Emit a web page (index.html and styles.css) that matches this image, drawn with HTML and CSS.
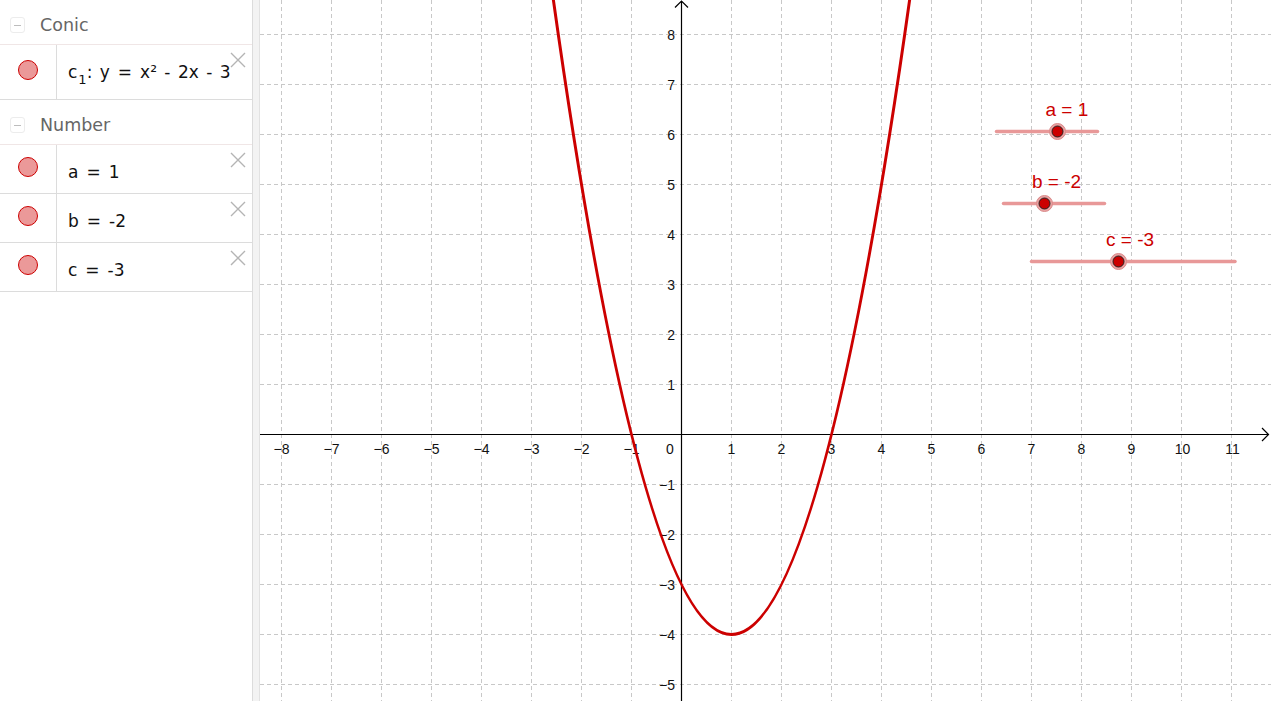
FILE: index.html
```html
<!DOCTYPE html>
<html lang="en">
<head>
<meta charset="utf-8">
<title>Conic</title>
<link rel="stylesheet" href="styles.css">
</head>
<body>
<div class="app">
  <aside class="algebra">
    <div class="group-head"><span class="toggle"></span><span class="group-name">Conic</span></div>
    <div class="item item-tall">
      <div class="marker-cell"><span class="marker"></span></div>
      <div class="formula">c<span class="sub">1</span>: y<span class="op">=</span>x² - 2x - 3</div>
      <svg class="close" viewBox="0 0 16 16"><path d="M1 1L15 15M15 1L1 15"/></svg>
    </div>
    <div class="group-head"><span class="toggle"></span><span class="group-name">Number</span></div>
    <div class="item">
      <div class="marker-cell"><span class="marker"></span></div>
      <div class="formula">a<span class="op">=</span>1</div>
      <svg class="close" viewBox="0 0 16 16"><path d="M1 1L15 15M15 1L1 15"/></svg>
    </div>
    <div class="item">
      <div class="marker-cell"><span class="marker"></span></div>
      <div class="formula">b<span class="op">=</span>-2</div>
      <svg class="close" viewBox="0 0 16 16"><path d="M1 1L15 15M15 1L1 15"/></svg>
    </div>
    <div class="item">
      <div class="marker-cell"><span class="marker"></span></div>
      <div class="formula">c<span class="op">=</span>-3</div>
      <svg class="close" viewBox="0 0 16 16"><path d="M1 1L15 15M15 1L1 15"/></svg>
    </div>
  </aside>
  <div class="splitter"></div>
  <main class="graphics">
    <svg class="canvas" width="1011" height="701" viewBox="260 0 1011 701">
      <path class="grid" d="M281.5 0V701M331.5 0V701M381.5 0V701M431.5 0V701M481.5 0V701M531.5 0V701M581.5 0V701M631.5 0V701M731.5 0V701M781.5 0V701M831.5 0V701M881.5 0V701M931.5 0V701M981.5 0V701M1031.5 0V701M1081.5 0V701M1131.5 0V701M1181.5 0V701M1231.5 0V701"/>
      <path class="grid" d="M260 34.5H1271M260 84.5H1271M260 134.5H1271M260 184.5H1271M260 234.5H1271M260 284.5H1271M260 334.5H1271M260 384.5H1271M260 484.5H1271M260 534.5H1271M260 584.5H1271M260 634.5H1271M260 684.5H1271"/>
      <path class="axis" d="M260 434.5H1268M1262 428L1268.5 434.5L1262 441M681.5 701V1M675 7.5L681.5 1L688 7.5"/>
      <g class="tick xt">
        <text x="281.5" y="454">−8</text>
        <text x="331.5" y="454">−7</text>
        <text x="381.5" y="454">−6</text>
        <text x="431.5" y="454">−5</text>
        <text x="481.5" y="454">−4</text>
        <text x="531.5" y="454">−3</text>
        <text x="581.5" y="454">−2</text>
        <text x="631.5" y="454">−1</text>
        <text x="670" y="454">0</text>
        <text x="731.5" y="454">1</text>
        <text x="781.5" y="454">2</text>
        <text x="831.5" y="454">3</text>
        <text x="881.5" y="454">4</text>
        <text x="931.5" y="454">5</text>
        <text x="981.5" y="454">6</text>
        <text x="1031.5" y="454">7</text>
        <text x="1081.5" y="454">8</text>
        <text x="1131.5" y="454">9</text>
        <text x="1182.5" y="454">10</text>
        <text x="1232.5" y="454">11</text>
      </g>
      <g class="tick yt">
        <text x="675" y="39.5">8</text>
        <text x="675" y="89.5">7</text>
        <text x="675" y="139.5">6</text>
        <text x="675" y="189.5">5</text>
        <text x="675" y="239.5">4</text>
        <text x="675" y="289.5">3</text>
        <text x="675" y="339.5">2</text>
        <text x="675" y="389.5">1</text>
        <text x="675" y="489.5">−1</text>
        <text x="675" y="539.5">−2</text>
        <text x="675" y="589.5">−3</text>
        <text x="675" y="639.5">−4</text>
        <text x="675" y="689.5">−5</text>
      </g>
      <path class="curve" d="M546.5 -50Q731.5 1319 916.5 -50"/>
      <g class="slider">
        <path class="track" d="M996.5 131.5H1097.5"/>
        <circle class="halo" cx="1057.5" cy="131.5" r="8"/>
        <circle class="knob" cx="1057.5" cy="131.5" r="5.5"/>
        <text class="slabel" x="1045.5" y="116">a = 1</text>
      </g>
      <g class="slider">
        <path class="track" d="M1003.5 203.5H1104.5"/>
        <circle class="halo" cx="1044.5" cy="203.5" r="8"/>
        <circle class="knob" cx="1044.5" cy="203.5" r="5.5"/>
        <text class="slabel" x="1032" y="188">b = -2</text>
      </g>
      <g class="slider">
        <path class="track" d="M1031.5 261.5H1235"/>
        <circle class="halo" cx="1118.5" cy="261.5" r="8"/>
        <circle class="knob" cx="1118.5" cy="261.5" r="5.5"/>
        <text class="slabel" x="1106" y="246">c = -3</text>
      </g>
    </svg>
  </main>
</div>
</body>
</html>
```
FILE: styles.css
```css
* { box-sizing: border-box; }
html, body { margin: 0; padding: 0; background: #fff; overflow: hidden; }
body { font-family: "DejaVu Sans", "Liberation Sans", sans-serif; color: #1a1a1a; }

.app { display: flex; width: 1271px; height: 701px; }

.algebra { width: 253px; flex: none; border-right: 1px solid #dcdcdc; background: #fff; }
.splitter { width: 7px; flex: none; background: #f3f3f3; border-right: 1px solid #e2e2e2; }
.graphics { flex: 1; position: relative; overflow: hidden; background: #fff; }
.canvas { display: block; }

.group-head { height: 45px; border-bottom: 1px solid #f0e6e6; display: flex; align-items: flex-start; padding-left: 10px; }
.toggle { width: 15px; height: 16px; margin-top: 17px; border: 1px solid #ececec; border-radius: 3px; position: relative; }
.toggle::after { content: ""; position: absolute; left: 3px; right: 3px; top: 7px; height: 1px; background: #bdbdbd; }
.group-name { margin: 15px 0 0 15px; font-size: 17.5px; line-height: 20px; color: #666; }

.item { height: 49px; display: flex; border-bottom: 1px solid #dcdcdc; position: relative; }
.item-tall { height: 55px; }
.marker-cell { width: 57px; flex: none; border-right: 1px solid #dcdcdc; display: flex; justify-content: center; align-items: flex-start; padding-top: 12px; padding-right: 1px; }
.item-tall .marker-cell { padding-top: 15px; }
.marker { width: 20px; height: 20px; border-radius: 50%; background: #eb9999; border: 1px solid #cc0000; }

.formula { padding: 17px 0 0 11px; font-size: 17px; line-height: 20px; white-space: nowrap; color: #111; word-spacing: 2px; }
.sub { font-size: 13px; position: relative; top: 6px; margin-left: 1px; }
.op { margin: 0 8px 0 8px; }

.close { position: absolute; top: 7px; right: 6px; width: 16px; height: 16px; }
.close path { stroke: #b4b4b4; stroke-width: 1.4; fill: none; }

.grid { stroke: #c8c8c8; stroke-width: 1; stroke-dasharray: 4 3; fill: none; }
.axis { stroke: #000; stroke-width: 1.2; fill: none; }
.tick { font-family: "Liberation Sans", Arial, sans-serif; font-size: 14px; fill: #111; }
.xt { text-anchor: middle; }
.yt { text-anchor: end; }
.curve { stroke: #cc0000; stroke-width: 3; fill: none; }

.track { stroke: #e89898; stroke-width: 3.5; stroke-linecap: round; fill: none; }
.halo { fill: #eba3a3; stroke: #d98a8a; stroke-width: 1; }
.knob { fill: #cc0000; stroke: #222; stroke-width: 1; }
.slabel { font-family: "Liberation Sans", Arial, sans-serif; font-size: 19px; fill: #cc0000; }
```
